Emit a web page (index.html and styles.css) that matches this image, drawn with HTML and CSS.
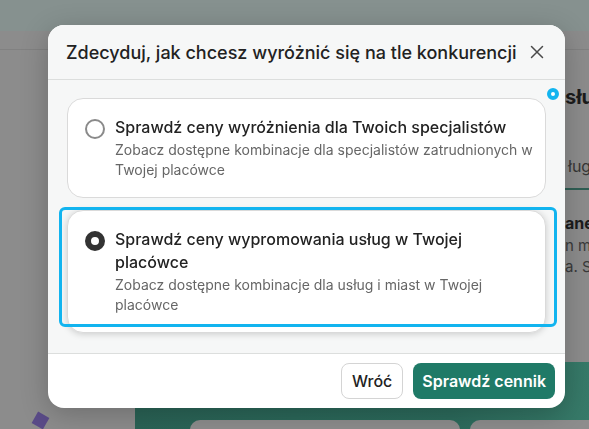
FILE: index.html
```html
<!DOCTYPE html>
<html lang="pl">
<head>
    <meta charset="utf-8">
    <title>Wyróżnij się na tle konkurencji</title>
    <link rel="stylesheet" href="styles.css">
</head>
<body>
    <!-- Page behind the dialog (dimmed) -->
    <div class="page">
        <div class="topbar"></div>
        <div class="subbar"></div>
        <div class="page-main">
            <div class="content"></div>
            <div class="aside">
                <h2>sługi</h2>
                <div class="tabs"><span>ługi</span></div>
                <h3>anel</h3>
                <p>n m<br>a. S</p>
            </div>
            <div class="side-bottom"><span class="diamond"></span></div>
            <div class="promo-panel">
                <div class="promo-box"></div>
                <div class="promo-box"></div>
            </div>
        </div>
    </div>

    <!-- Dialog -->
    <div class="modal-layer">
        <div class="modal">
            <div class="modal-header">
                <h1 class="modal-title">Zdecyduj, jak chcesz wyróżnić się na tle konkurencji</h1>
                <button class="close-button" aria-label="Zamknij">
                    <svg width="14" height="14" viewBox="0 0 14 14">
                        <path d="M1.5 1.5 L12.5 12.5 M12.5 1.5 L1.5 12.5" stroke="#4a4a4a" stroke-width="1.5" stroke-linecap="round" fill="none"/>
                    </svg>
                </button>
            </div>

            <div class="modal-body">
                <span class="tour-beacon"></span>

                <label class="option">
                    <span class="option-radio"></span>
                    <span class="option-copy">
                        <span class="option-title">Sprawdź ceny wyróżnienia dla Twoich specjalistów</span>
                        <span class="option-text">Zobacz dostępne kombinacje dla specjalistów zatrudnionych w Twojej placówce</span>
                    </span>
                </label>

                <label class="option selected">
                    <span class="option-radio"></span>
                    <span class="option-copy">
                        <span class="option-title">Sprawdź ceny wypromowania usług w Twojej placówce</span>
                        <span class="option-text">Zobacz dostępne kombinacje dla usług i miast w Twojej placówce</span>
                    </span>
                    <span class="tour-highlight"></span>
                </label>
            </div>

            <div class="modal-footer">
                <button class="btn btn-secondary">Wróć</button>
                <button class="btn btn-primary">Sprawdź cennik</button>
            </div>
        </div>
    </div>
</body>
</html>
```

FILE: styles.css
```css
body {
    margin: 0;
    height: 429px;
    overflow: hidden;
    background-color: #8c8c8c;
    font-family: Inter, "Noto Sans", sans-serif;
}

/* Page behind the overlay */
.topbar {
    height: 31px;
    background-color: #86918f;
}

.subbar {
    height: 18px;
    border-bottom: 1px solid #818181;
}

.page-main {
    display: grid;
    grid-template-columns: 135px 430px 1fr;
    grid-template-rows: 312px 67px;
    grid-template-areas:
        "content content aside"
        "side panel panel";
}

.content {
    grid-area: content;
}

.aside {
    grid-area: aside;
    padding-top: 33px;
    white-space: nowrap;
    overflow: hidden;
}

.aside h2 {
    margin: 0;
    font-size: 20px;
    line-height: 28px;
    font-weight: 700;
    color: #1c1c1c;
}

.tabs {
    margin-top: 43px;
    padding: 0 0 10px 3px;
    font-size: 16px;
    line-height: 24px;
    color: #363636;
    border-bottom: 2px solid #2f5e54;
}

.aside h3 {
    margin: 21px 0 0;
    font-size: 16px;
    line-height: 24px;
    font-weight: 700;
    color: #1c1c1c;
}

.aside p {
    margin: 0;
    font-size: 15px;
    line-height: 21px;
    color: #3a3a3a;
}

.side-bottom {
    grid-area: side;
    padding: 52px 0 0 34px;
}

.diamond {
    display: block;
    width: 13px;
    height: 13px;
    background-color: #5a4b88;
    transform: rotate(30deg);
}

.promo-panel {
    grid-area: panel;
    display: flex;
    gap: 10px;
    padding: 58px 0 0 55px;
    background: linear-gradient(90deg, #2a6356, #2c6b5c 70%, #377a69);
}

.promo-box {
    flex: none;
    width: 270px;
    height: 20px;
    background-color: #8d8d8d;
    border-radius: 10px 10px 0 0;
}

/* Dialog */
.modal-layer {
    position: fixed;
    top: 0;
    left: 0;
    right: 0;
    bottom: 0;
    padding: 25px 0 0 48px;
}

.modal {
    width: 517px;
    background-color: #fff;
    border-radius: 16px;
    overflow: hidden;
    box-shadow: 0 6px 28px rgba(0,0,0,0.22);
}

.modal-header {
    height: 54px;
    display: flex;
    align-items: center;
    justify-content: space-between;
    padding: 0 21px 0 18px;
    background-color: #f6f7f7;
    border-bottom: 1px solid #dcdedd;
}

.modal-title {
    margin: 0;
    font-size: 18px;
    font-weight: 500;
    color: #222;
    white-space: nowrap;
}

.close-button {
    display: flex;
    width: 14px;
    height: 14px;
    padding: 0;
    border: none;
    background: none;
    cursor: pointer;
}

.modal-body {
    position: relative;
    display: flex;
    flex-direction: column;
    gap: 12px;
    padding: 18px 19px 20px;
    background-color: #f6f7f7;
    border-bottom: 1px solid #dcdedd;
}

.option {
    position: relative;
    display: flex;
    align-items: flex-start;
    gap: 10px;
    padding: 17px 12px 17px 17px;
    background-color: #fff;
    border: 1px solid #dadada;
    border-radius: 16px;
    cursor: pointer;
}

.option.selected {
    box-shadow: 0 1px 7px rgba(0,0,0,0.18);
}

.option-radio {
    flex: none;
    box-sizing: border-box;
    width: 20px;
    height: 20px;
    margin-top: 3px;
    border: 2px solid #8a8a8a;
    border-radius: 50%;
    background-color: #fff;
}

.option.selected .option-radio {
    border: 6px solid #333;
}

.option-copy {
    display: flex;
    flex-direction: column;
}

.option-title {
    font-size: 16px;
    line-height: 22.4px;
    font-weight: 500;
    color: #222;
}

.option-text {
    margin-top: 2px;
    font-size: 14px;
    line-height: 20px;
    color: #666;
}

/* Product tour overlay */
.tour-highlight {
    position: absolute;
    left: -9px;
    top: -4px;
    right: -12px;
    bottom: 5px;
    border: 3px solid #12b4ef;
    border-radius: 6px;
    pointer-events: none;
}

.tour-beacon {
    position: absolute;
    top: 8px;
    right: 6px;
    box-sizing: border-box;
    width: 12px;
    height: 12px;
    border: 4px solid #12b4ef;
    border-radius: 50%;
    background-color: #fff;
}

.modal-footer {
    display: flex;
    justify-content: flex-end;
    gap: 10px;
    padding: 9px 10px;
}

.btn {
    height: 36px;
    padding: 0 10px;
    border-radius: 8px;
    font-family: Inter, "Noto Sans", sans-serif;
    font-size: 16px;
    font-weight: 500;
    cursor: pointer;
}

.btn-secondary {
    background-color: #fff;
    border: 1px solid #d4d4d4;
    color: #222;
}

.btn-primary {
    padding: 0 9px;
    background-color: #1f7a67;
    border: none;
    color: #fff;
    font-weight: 600;
}
```
